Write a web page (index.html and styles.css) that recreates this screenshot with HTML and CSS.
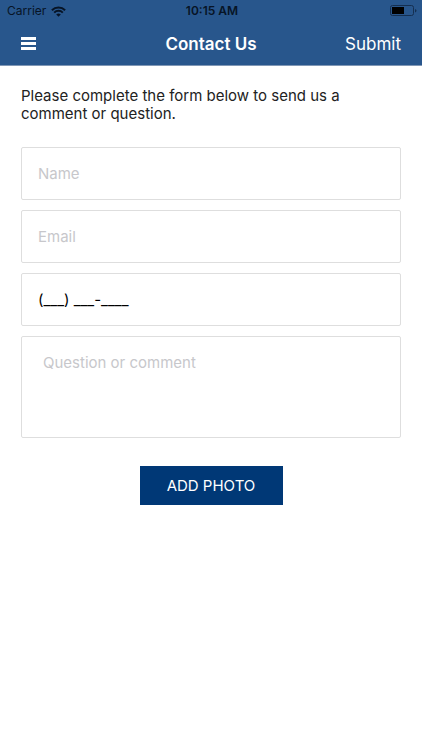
FILE: index.html
```html
<!DOCTYPE html>
<html lang="en">
<head>
<meta charset="utf-8">
<meta name="viewport" content="width=device-width, initial-scale=1">
<title>Contact Us</title>
<link rel="stylesheet" href="styles.css">
</head>
<body>
<header class="header">
  <div class="status">
    <div class="carrier">
      <span>Carrier</span>
      <svg class="wifi" viewBox="0 0 15 11" aria-hidden="true">
        <path d="M.9 4.300a9.400 9.400 0 0 1 13.200 0M3.200 6.600a6.100 6.100 0 0 1 8.600 0" fill="none" stroke="currentColor" stroke-width="2"/>
        <path d="M5.200 8.500a3.300 3.300 0 0 1 4.600 0L7.500 10.800z" fill="currentColor"/>
      </svg>
    </div>
    <span class="time">10:15 AM</span>
    <svg class="battery" viewBox="0 0 27 12" aria-hidden="true">
      <rect x=".5" y=".5" width="23" height="10" rx="2" fill="none" stroke="#152f50"/>
      <rect x="2" y="2" width="12" height="7" fill="#000"/>
      <path d="M25 4v3.500q1.500-.5 1.500-1.750T25 4z" fill="#152f50"/>
    </svg>
  </div>
  <nav class="navbar">
    <button class="menu" type="button" aria-label="Menu">
      <svg class="bars" viewBox="0 0 15 13" aria-hidden="true">
        <path d="M0 0h15v3H0zM0 5h15v3H0zM0 10h15v3H0z" fill="currentColor"/>
      </svg>
    </button>
    <h1 class="title">Contact Us</h1>
    <button class="submit" type="submit" form="contact">Submit</button>
  </nav>
</header>
<main class="content">
  <p class="intro">Please complete the form below to send us a comment or question.</p>
  <form class="form" id="contact">
    <input class="field" type="text" placeholder="Name" aria-label="Name">
    <input class="field" type="email" placeholder="Email" aria-label="Email">
    <input class="field" type="tel" value="(___) ___-____" aria-label="Phone">
    <textarea class="field message" placeholder="Question or comment" aria-label="Question or comment"></textarea>
    <button class="photo" type="button">ADD PHOTO</button>
  </form>
</main>
</body>
</html>
```
FILE: styles.css
```css
* {
  box-sizing: border-box;
}

body {
  margin: 0;
  background: #fff;
  color: #222;
  font: 15px/18px Inter, "Liberation Sans", sans-serif;
}

button {
  border: 0;
  padding: 0;
  background: none;
  color: #fff;
  font: inherit;
}

.header {
  background: #28568c;
  border-bottom: 1px solid #8097b5;
}

.status {
  display: grid;
  grid-template-columns: 1fr auto 1fr;
  align-items: center;
  height: 22px;
  padding: 0 5px 0 7px;
  color: #071426;
  font-size: 12px;
}

.carrier {
  display: flex;
  align-items: center;
  gap: 5px;
}

.wifi {
  width: 15px;
  height: 11px;
}

.time {
  font-weight: 600;
}

.battery {
  width: 27px;
  height: 12px;
  justify-self: end;
}

.navbar {
  display: grid;
  grid-template-columns: 1fr auto 1fr;
  align-items: center;
  height: 43px;
  padding: 0 21px;
}

.menu {
  justify-self: start;
}

.bars {
  display: block;
  width: 15px;
  height: 13px;
}

.title {
  margin: 0;
  color: #fff;
  font-size: 17px;
  font-weight: 600;
}

.submit {
  justify-self: end;
  font-size: 17px;
}

.content {
  padding: 21px;
}

.intro {
  margin: 0 0 24px;
}

.form {
  display: flex;
  flex-direction: column;
  gap: 10px;
}

.field {
  width: 100%;
  height: 53px;
  padding: 0 16px;
  border: 1px solid #dedede;
  border-radius: 2px;
  background: #fff;
  color: #000;
  font: inherit;
  outline: 0;
}

.field::placeholder {
  color: #c7c7cb;
  opacity: 1;
}

.message {
  height: 102px;
  padding: 17px 21px;
  resize: none;
}

.photo {
  align-self: center;
  width: 143px;
  height: 39px;
  margin-top: 18px;
  background: #003876;
}
```
